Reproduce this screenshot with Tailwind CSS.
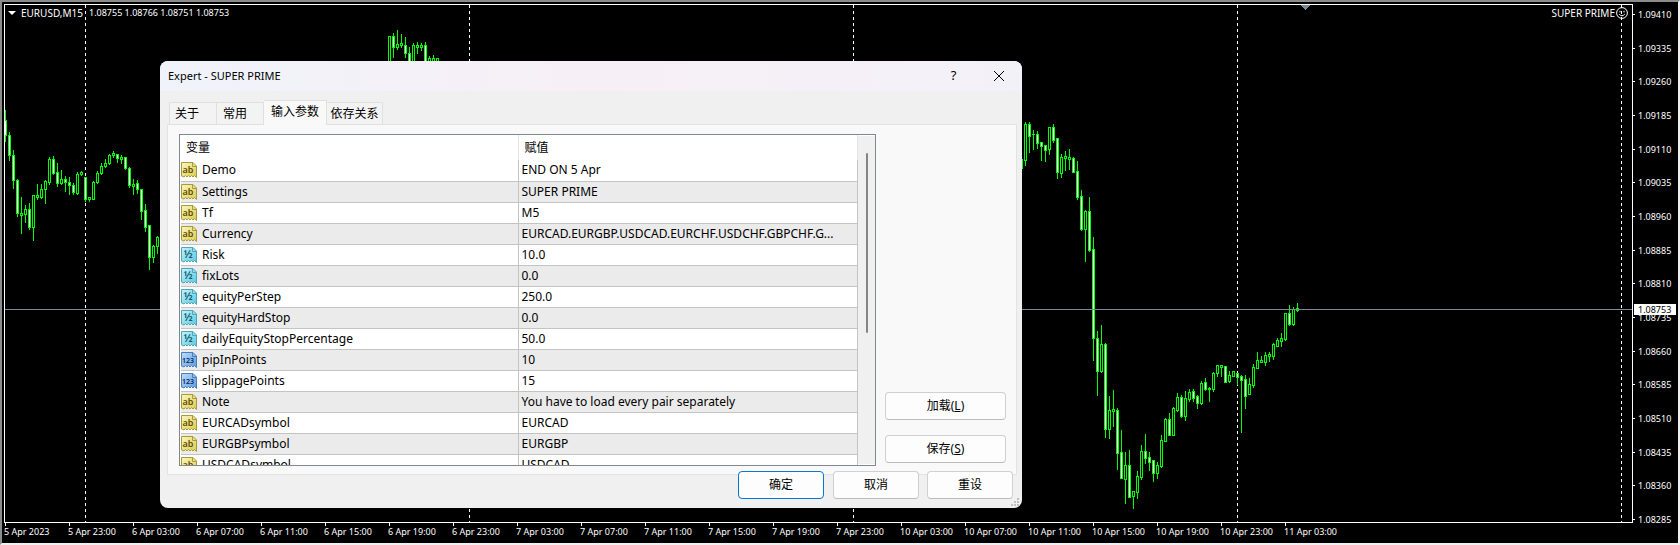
<!DOCTYPE html>
<html lang="zh-CN">
<head>
<meta charset="utf-8">
<title>EURUSD,M15</title>
<script src="https://cdn.jsdelivr.net/npm/@tailwindcss/browser@4"></script>
</head>
<body class="bg-black">
<main class="relative flex h-screen flex-col overflow-hidden border-t-2 border-r-2 border-b-2 border-l-2 border-t-[#8c8c8c] border-l-[#8c8c8c] border-r-[#f0f0f0] border-b-[#f0f0f0] bg-black pt-[2px] pl-[2px] font-['Noto_Sans','Noto_Sans_CJK_SC',sans-serif] text-[9px] text-white">
  <div class="flex min-h-0 flex-1">
    <section class="relative min-w-0 flex-1 border border-white" aria-label="EURUSD M15">
      <svg id="plot" class="absolute inset-0 size-full" shape-rendering="crispEdges"></svg>
      <header class="relative flex items-center justify-between pt-[2px] pr-[4px] pl-[3px] leading-[12px]">
        <div class="flex items-center text-[10px] whitespace-pre">
          <svg class="mr-[5px] h-[4px] w-[8px]" viewBox="0 0 8 4"><path d="M0 0h8L4 4z" fill="#fff"/></svg>
          <span>EURUSD,M15</span>
          <span class="ml-[6px] text-[9px]">1.08755 1.08766 1.08751 1.08753</span>
        </div>
        <div class="flex items-center gap-px text-[10px]">
          <span>SUPER PRIME</span>
          <svg class="h-[12px] w-[12px]" viewBox="0 0 12 12" fill="none" stroke="#fff"><circle cx="6" cy="6" r="5.4"/><path d="M3.2 7.2Q6 10.4 8.8 7.2M4 3.8v1.6M8 3.8v1.6"/></svg>
        </div>
      </header>
    </section>
    <aside class="relative w-[45px]">
      <svg id="price" class="size-full overflow-visible" fill="#fff"></svg>
      <span class="absolute top-[300px] right-[2px] left-px bg-white pl-[4px] text-[9px] leading-[11px] text-black">1.08753</span>
    </aside>
  </div>
  <footer class="h-[20px]"><svg id="time" class="size-full" fill="#fff"></svg></footer>

  <div role="dialog" aria-label="Expert - SUPER PRIME" class="absolute top-[59px] left-[158px] flex w-[862px] flex-col overflow-hidden rounded-lg bg-[#f0f0f0] text-[12px] text-black">
    <div class="flex h-[30px] items-center bg-linear-to-r from-[#f0f3fa] via-[#f7eff6] to-[#f3f1f8] pl-[8px]">
      <h1 class="flex-1 text-[11px]">Expert - SUPER PRIME</h1>
      <button class="w-[45px] text-[13px]" aria-label="Help">?</button>
      <button class="flex w-[46px] justify-center" aria-label="Close"><svg class="size-[10px]" viewBox="0 0 10 10" stroke="#000"><path d="M0 0L10 10M10 0L0 10"/></svg></button>
    </div>
    <div class="flex flex-col pr-[5px] pl-[7px]">
      <nav class="relative z-10 -mb-px flex items-end pt-[9px] pl-[2px]" role="tablist">
        <button role="tab" class="h-[23px] w-[48px] border border-[#e0e0e0] bg-[#f3f3f3] pr-[12px]">关于</button>
        <button role="tab" class="h-[23px] w-[47px] border border-l-0 border-[#e0e0e0] bg-[#f3f3f3] pr-[10px]">常用</button>
        <button role="tab" aria-selected="true" class="h-[25px] w-[63px] border border-b-0 border-l-0 border-[#e0e0e0] bg-[#f9f9f9] pb-[2px]">输入参数</button>
        <button role="tab" class="h-[23px] w-[56px] border border-l-0 border-[#e0e0e0] bg-[#f3f3f3]">依存关系</button>
      </nav>
      <div class="flex h-[351px] justify-between border border-[#e3e3e3] bg-[#f9f9f9] pt-[9px] pr-[10px] pl-[11px]">
        <div class="flex h-[332px] w-[697px] overflow-hidden border border-[#828790] bg-white pl-px">
          <div class="min-w-0 flex-1">
            <table class="w-full table-fixed border-collapse text-left text-[12px] leading-[18px]">
              <colgroup><col class="w-[337px]"><col></colgroup>
              <thead><tr class="h-[25px]"><th class="border-r border-[#e3e3e3] pl-[5px] font-normal">变量</th><th class="border-r border-[#e3e3e3] pl-[6px] font-normal">赋值</th></tr></thead>
              <tbody id="rows"></tbody>
            </table>
          </div>
          <div class="my-px flex w-[17px] justify-center bg-[#f0f0f0] pt-[17px]"><div class="h-[180px] w-[2px] rounded-full bg-[#858585]"></div></div>
        </div>
        <div class="flex flex-col justify-end gap-[15px] pb-[11px]">
          <button class="h-[28px] w-[121px] rounded border border-[#d0d0d0] border-b-[#bcbcbc] bg-[#fdfdfd]">加载(<u>L</u>)</button>
          <button class="h-[28px] w-[121px] rounded border border-[#d0d0d0] border-b-[#bcbcbc] bg-[#fdfdfd]">保存(<u>S</u>)</button>
        </div>
      </div>
    </div>
    <div class="relative -mt-[4px] flex justify-end gap-[8px] pr-[9px] pb-[9px]">
      <button class="mr-px h-[28px] w-[86px] rounded border border-[#0078d4] bg-[#fdfdfd]">确定</button>
      <button class="h-[28px] w-[86px] rounded border border-[#d0d0d0] border-b-[#bcbcbc] bg-[#fdfdfd]">取消</button>
      <button class="h-[28px] w-[86px] rounded border border-[#d0d0d0] border-b-[#bcbcbc] bg-[#fdfdfd]">重设</button>
      <svg class="absolute right-[3px] bottom-[2px] size-[8px]" viewBox="0 0 8 8" fill="#bfbfbf"><path d="M6 0h2v2H6zM3 3h2v2H3zM6 3h2v2H6zM0 6h2v2H0zM3 6h2v2H3zM6 6h2v2H6z"/></svg>
    </div>
  </div>
</main>

<svg class="absolute size-0">
  <defs>
    <linearGradient id="gy" x1="0" y1="0" x2="1" y2="1"><stop offset="0" stop-color="#fbf6c0"/><stop offset="1" stop-color="#dccb4c"/></linearGradient>
    <linearGradient id="gc" x1="0" y1="0" x2="1" y2="1"><stop offset="0" stop-color="#c4f4fb"/><stop offset="1" stop-color="#5cc6de"/></linearGradient>
    <linearGradient id="gb" x1="0" y1="0" x2="1" y2="1"><stop offset="0" stop-color="#bfdcfb"/><stop offset="1" stop-color="#5c9be0"/></linearGradient>
  </defs>
</svg>

<script>
const NS = 'http://www.w3.org/2000/svg';
const el = (p, tag, a, text) => {
  const e = document.createElementNS(NS, tag);
  for (const k in a) e.setAttribute(k, a[k]);
  if (text) e.textContent = text;
  p.appendChild(e);
  return e;
};

// Candle runs: first bar column, then [high, body top, body bottom, low, falling?] per bar
const runs = [
  [5, [110,120,135,141,1],[132,135,155,160,1],[150,155,180,188,1],[179,180,213,216,1],[197,213,215,233,0],[205,209,214,222,0],[203,209,227,229,1],[195,195,227,240,0],[184,195,197,199,0],[184,189,197,198,0],[180,181,189,203,0],[157,159,182,184,0],[156,159,173,174,1],[163,172,183,186,1],[170,179,183,184,0],[176,179,182,191,1],[177,182,185,194,1],[183,185,192,194,1],[172,174,193,194,0],[171,172,174,175,0],[177,177,199,201,1],[197,197,199,201,0],[181,182,199,199,0],[171,173,182,183,0],[163,166,173,174,0],[159,163,166,167,0],[154,155,163,164,0],[151,153,155,157,0],[154,154,158,162,1],[155,157,159,163,0],[157,157,168,169,1],[167,168,185,187,1],[179,184,186,194,0],[180,183,189,193,1],[189,189,211,219,1],[204,210,227,231,1],[225,225,257,269,1],[245,246,257,262,0],[236,237,246,253,0]],
  [389, [36,36,64,70,0],[33,36,47,57,1],[30,44,47,49,0],[34,43,45,47,0],[37,45,53,57,1],[47,53,70,70,1],[43,45,70,70,0],[42,45,47,53,0],[43,45,47,50,0],[42,45,70,70,1],[56,58,70,70,0],[55,58,62,70,0],[58,58,70,70,0]],
  [1021, [159,159,168,168,0],[122,124,160,165,0],[122,124,136,152,1],[130,134,134,149,0],[131,134,143,148,1],[142,142,146,160,1],[145,145,150,161,1],[127,127,149,154,0],[124,127,140,142,1],[138,138,172,178,1],[154,157,173,177,0],[151,156,158,170,0],[149,157,159,169,0],[157,158,172,172,1],[161,171,197,199,1],[190,196,229,230,1],[210,211,229,261,0],[197,211,250,251,1],[237,249,338,360,1],[331,338,371,395,1],[325,344,371,372,0],[343,344,429,437,1],[396,410,429,438,0],[390,409,411,426,0],[408,410,453,469,1],[430,452,478,478,1],[452,465,479,503,0],[450,465,497,497,1],[491,491,496,508,0],[471,476,492,498,0],[445,451,477,479,0],[434,451,458,463,1],[452,457,462,470,1],[460,460,473,481,1],[462,465,473,478,0],[435,440,466,467,0],[418,419,441,441,0],[413,419,435,435,1],[407,408,435,435,0],[393,397,410,411,0],[395,397,416,417,1],[391,398,416,420,0],[389,392,399,401,0],[389,391,398,401,1],[395,396,403,408,1],[381,383,403,404,0],[378,382,389,390,1],[387,388,389,401,0],[372,373,389,391,0],[365,365,373,376,0],[365,365,367,376,0],[366,366,382,382,1],[371,375,381,382,0],[371,371,376,376,0],[373,373,377,384,1],[375,376,380,432,1],[375,379,396,408,1],[378,384,394,394,0],[364,367,385,387,0],[352,360,368,368,0],[356,360,362,362,0],[352,355,362,365,0],[352,354,356,361,0],[343,344,356,359,0],[338,340,346,346,0],[333,338,341,346,0],[313,313,339,340,0],[305,313,324,325,1],[307,309,324,325,0],[303,308,310,311,0]],
];
const plot = document.getElementById('plot');
const g = el(plot, 'g', { transform: 'translate(-5 -5)' });
for (const x of [85, 469, 853, 1237, 1621])
  el(g, 'path', { d: `M${x}.5 5V522`, stroke: '#fff', 'stroke-dasharray': '3 3' });
for (const [x0, ...bars] of runs) bars.forEach(([h, t, b, l, down], i) => {
  const x = x0 + 4 * i;
  el(g, 'rect', { x, y: h, width: 1, height: l - h + 1, fill: '#0f0' });
  el(g, 'rect', { x: x - 1, y: t, width: 3, height: b - t + 1, fill: '#0f0' });
  if (b - t > 1) el(g, 'rect', { x, y: t + 1, width: 1, height: b - t - 1, fill: down ? '#fff' : '#000' });
});
el(g, 'path', { d: 'M5 309.5H1700', stroke: '#778899' });
el(g, 'path', { d: 'M1300 5h11l-5.5 5z', fill: '#778899' });

const price = document.getElementById('price');
['1.09410','1.09335','1.09260','1.09185','1.09110','1.09035','1.08960','1.08885','1.08810','1.08735','1.08660','1.08585','1.08510','1.08435','1.08360','1.08285'].forEach((p, i) => {
  const y = 10 + Math.round(i * 33.67);
  el(price, 'rect', { x: 0, y, width: 2, height: 1 });
  el(price, 'text', { x: 5, y: y + 4 }, p);
});

const time = document.getElementById('time');
['5 Apr 2023','5 Apr 23:00','6 Apr 03:00','6 Apr 07:00','6 Apr 11:00','6 Apr 15:00','6 Apr 19:00','6 Apr 23:00','7 Apr 03:00','7 Apr 07:00','7 Apr 11:00','7 Apr 15:00','7 Apr 19:00','7 Apr 23:00','10 Apr 03:00','10 Apr 07:00','10 Apr 11:00','10 Apr 15:00','10 Apr 19:00','10 Apr 23:00','11 Apr 03:00'].forEach((t, i) => {
  el(time, 'rect', { x: 1 + 64 * i, y: 0, width: 1, height: 3 });
  el(time, 'text', { x: 64 * i, y: 12 }, t);
});

// Type badge of an input row: text, real or whole number
const badge = {
  ab: ['url(#gy)', '#a89a3c', '#5a4e00', 'ab', 9],
  half: ['url(#gc)', '#4fa6ba', '#0e5a70', '½', 11],
  num: ['url(#gb)', '#4a7fbd', '#0a2a5c', '123', 7],
};
const rows = [['ab','Demo','END ON 5 Apr'],['ab','Settings','SUPER PRIME'],['ab','Tf','M5'],['ab','Currency','EURCAD.EURGBP.USDCAD.EURCHF.USDCHF.GBPCHF.G...'],['half','Risk','10.0'],['half','fixLots','0.0'],['half','equityPerStep','250.0'],['half','equityHardStop','0.0'],['half','dailyEquityStopPercentage','50.0'],['num','pipInPoints','10'],['num','slippagePoints','15'],['ab','Note','You have to load every pair separately'],['ab','EURCADsymbol','EURCAD'],['ab','EURGBPsymbol','EURGBP'],['ab','USDCADsymbol','USDCAD']];
document.getElementById('rows').innerHTML = rows.map(([k, name, value]) => {
  const [fill, edge, ink, label, size] = badge[k];
  return `<tr class="h-[21px] even:bg-[#ebebeb]">
    <td class="border-r border-b border-[#c4c4c4] p-0"><div class="flex items-center gap-[5px] whitespace-nowrap"><svg class="size-[16px]" viewBox="0 0 16 16"><path d="M.5 .5H12L15.5 4V15.5L13.5 13.5L12 15L10.5 13.5L9 15L7.5 13.5L6 15L4.5 13.5L3 15L.5 14z" fill="${fill}" stroke="${edge}"/><path d="M11.5 .5V4.5H15.5" fill="none" stroke="${edge}"/><text x="7" y="11" text-anchor="middle" font-size="${size}" font-weight="600" fill="${ink}">${label}</text></svg><span>${name}</span></div></td>
    <td class="border-r border-b border-[#c4c4c4] py-0 pr-0 pl-[3px] whitespace-nowrap">${value}</td></tr>`;
}).join('');
</script>
</body>
</html>
